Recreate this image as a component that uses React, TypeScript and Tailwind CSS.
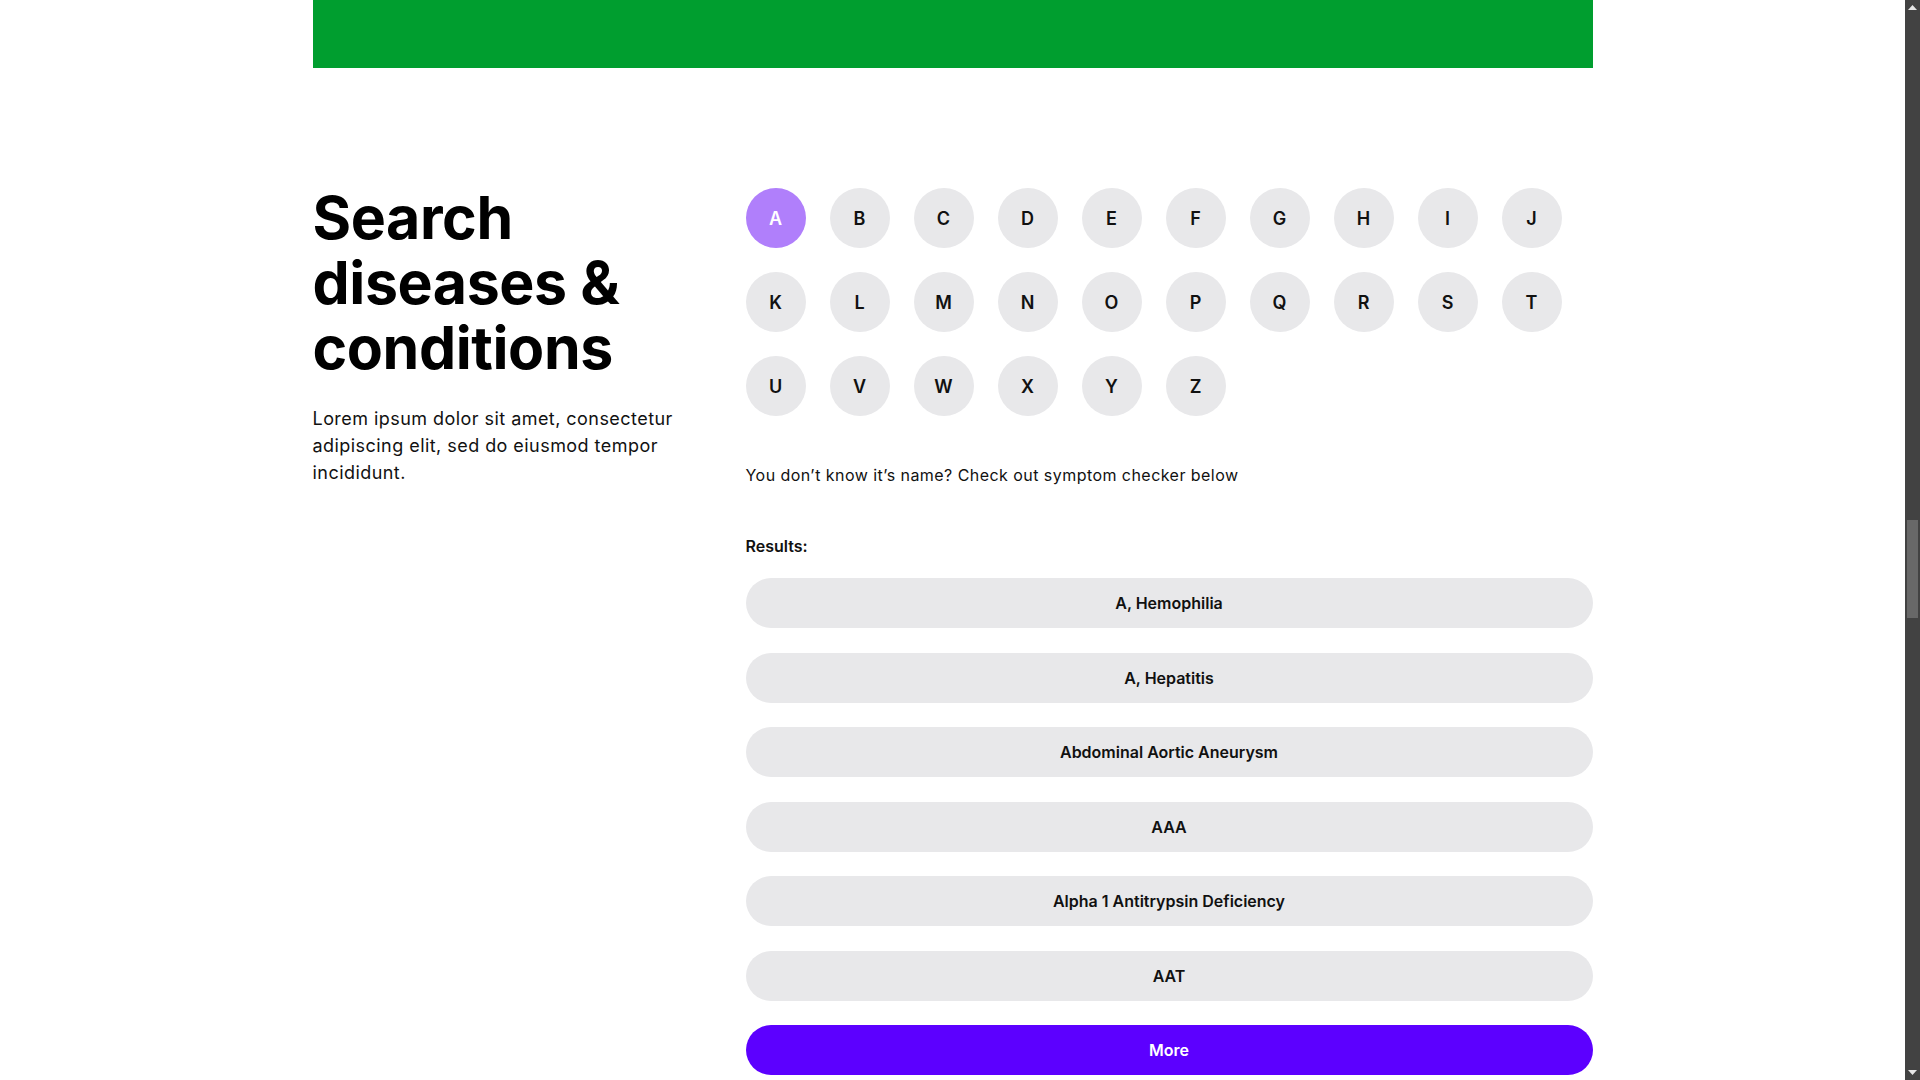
import React from 'react';

const letters = "ABCDEFGHIJKLMNOPQRSTUVWXYZ".split("");

const results = [
  "A, Hemophilia",
  "A, Hepatitis",
  "Abdominal Aortic Aneurysm",
  "AAA",
  "Alpha 1 Antitrypsin Deficiency",
  "AAT",
];

const Scrollbar: React.FC = () => (
  <div className="w-[15px] shrink-0 bg-[#424242] flex flex-col items-center">
    <div className="h-[15px] w-full flex items-center justify-center">
      <svg width="9" height="5" viewBox="0 0 9 5"><path d="M0 5 L4.5 0 L9 5 Z" fill="#e6e6e6" /></svg>
    </div>
    <div className="flex-1 w-full px-[2px]">
      <div className="mt-[505px] h-[98px] w-full bg-[#686868]"></div>
    </div>
    <div className="h-[15px] w-full flex items-center justify-center">
      <svg width="9" height="5" viewBox="0 0 9 5"><path d="M0 0 L4.5 5 L9 0 Z" fill="#e6e6e6" /></svg>
    </div>
  </div>
);

export default function App() {
  return (
    <div className="flex h-[1080px] w-full overflow-hidden bg-white">
      <main className="flex-1 overflow-hidden">
        <div className="mx-auto w-[1280px]">
          <div className="h-[68px] bg-[#009e2f]"></div>

          <section className="mt-[120px] flex">
            {/* left column */}
            <div className="w-[433px] shrink-0 pr-8">
              <h1 className="-mt-[3px] font-['Inter',sans-serif] text-[59px] font-bold leading-[65px] tracking-[-0.4px] text-black">
                Search
                <br />
                diseases &amp;
                <br />
                conditions
              </h1>
              <p className="mt-[25px] w-[380px] font-['Inter',sans-serif] text-[18px] leading-[27px] tracking-[0.45px] text-[#111]">
                Lorem ipsum dolor sit amet, consectetur adipiscing elit, sed do eiusmod tempor incididunt.
              </p>
            </div>

            {/* right column */}
            <div className="flex-1">
              <div className="grid grid-cols-[repeat(10,60px)] gap-6">
                {letters.map((l, i) => (
                  <button
                    key={l}
                    className={
                      i === 0
                        ? "h-[60px] w-[60px] rounded-full bg-[#b07ffb] font-['Inter',sans-serif] text-[18px] font-semibold text-white flex items-center justify-center"
                        : "h-[60px] w-[60px] rounded-full bg-[#e8e8ea] font-['Inter',sans-serif] text-[18px] font-semibold text-[#111] flex items-center justify-center"
                    }
                  >
                    {l}
                  </button>
                ))}
              </div>

              <p className="mt-[47px] font-['Inter',sans-serif] text-[16px] leading-[24px] tracking-[0.45px] text-[#111]">
                You don’t know it’s name? Check out symptom checker below
              </p>

              <h4 className="mt-[47px] font-['Inter',sans-serif] text-[16px] font-semibold leading-[24px] text-[#111]">
                Results:
              </h4>

              <div className="mt-[20px] flex flex-col gap-[24.5px]">
                {results.map((r) => (
                  <div
                    key={r}
                    className="h-[50px] rounded-full bg-[#e8e8ea] flex items-center justify-center font-['Inter',sans-serif] text-[16px] font-semibold text-[#111]"
                  >
                    {r}
                  </div>
                ))}
                <button className="h-[50px] rounded-full bg-[#5c00ff] flex items-center justify-center font-['Inter',sans-serif] text-[16px] font-semibold text-white">
                  More
                </button>
              </div>
            </div>
          </section>
        </div>
      </main>
      <Scrollbar />
    </div>
  );
}
